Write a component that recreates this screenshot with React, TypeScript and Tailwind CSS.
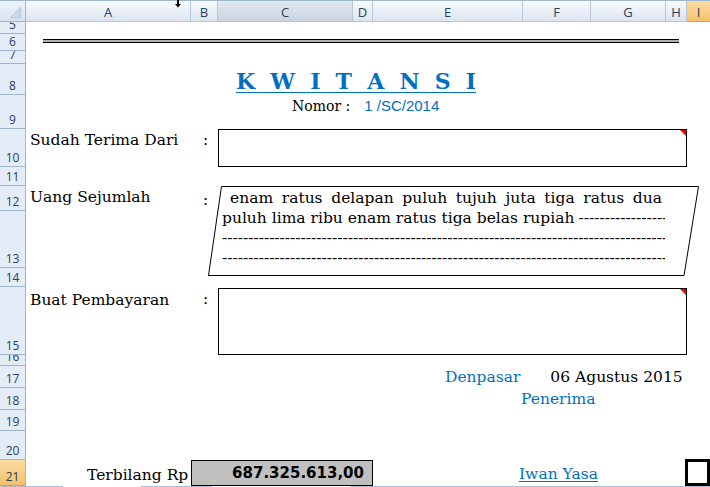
import React from "react";

const rowHeads = [
  { n: "5", c: "h-[12px]" },
  { n: "6", c: "h-[17px]" },
  { n: "7", c: "h-[13px]" },
  { n: "8", c: "h-[31px]" },
  { n: "9", c: "h-[34px]" },
  { n: "10", c: "h-[38px]" },
  { n: "11", c: "h-[19px]" },
  { n: "12", c: "h-[25px]" },
  { n: "13", c: "h-[57px]" },
  { n: "14", c: "h-[19px]" },
  { n: "15", c: "h-[68px]" },
  { n: "16", c: "h-[11px]" },
  { n: "17", c: "h-[22px]" },
  { n: "18", c: "h-[22px]" },
  { n: "19", c: "h-[21px]" },
  { n: "20", c: "h-[29px]" },
];

const colHeads = [
  { n: "A", c: "w-[165px]" },
  { n: "B", c: "w-[27px]" },
  { n: "C", c: "w-[135px]" },
  { n: "D", c: "w-[20px]" },
  { n: "E", c: "w-[150px]" },
  { n: "F", c: "w-[68px]" },
  { n: "G", c: "w-[75px]" },
  { n: "H", c: "w-[21px]" },
];

const DASHES = "-".repeat(140);

function CommentMark() {
  return (
    <span className="absolute top-0 right-0 w-0 h-0 border-t-[6px] border-t-[#ff0000] border-l-[6px] border-l-transparent" />
  );
}

export default function App() {
  return (
    <div className="relative w-[710px] h-[487px] overflow-hidden bg-white">
      {/* column header */}
      <div className="flex h-[22px] border-t border-[#9eb6ce] font-['Open_Sans',sans-serif] text-[13px] leading-none text-[#27415f]">
        <div className="relative w-[26px] shrink-0 border-r border-b border-[#9eb6ce] bg-linear-to-b from-[#eef3fa] to-[#d9e3f0]">
          <svg className="absolute inset-0" width="26" height="21" viewBox="0 0 26 21">
            <polygon points="21,6 21,17 10,17" fill="#c9d7e8" stroke="#aebfd4" strokeWidth="0.6" />
          </svg>
        </div>
        {colHeads.map((h) => (
          <div
            key={h.n}
            className={`${h.c} shrink-0 flex items-center justify-center pt-[2px] border-r border-b border-[#b4c6dc] ${
              h.n === "C"
                ? "bg-linear-to-b from-[#e3e9f1] to-[#c9d3df]"
                : "bg-linear-to-b from-[#f8fafd] to-[#dbe4f0]"
            }`}
          >
            {h.n}
          </div>
        ))}
        <div className="w-[23px] shrink-0 flex items-center justify-center pt-[2px] border-b border-[#f29536] bg-linear-to-b from-[#fbdda3] to-[#f5c16a]">
          I
        </div>
      </div>

      {/* mouse cursor */}
      <svg className="absolute left-[175px] top-0" width="6" height="8" viewBox="0 0 6 8">
        <rect x="2" y="0" width="2" height="4.5" fill="#000" />
        <polygon points="0,4 6,4 3,7.5" fill="#000" />
      </svg>

      <div className="flex">
        {/* row headers */}
        <div className="w-[26px] shrink-0 flex flex-col border-r border-[#9eb6ce] font-['Open_Sans',sans-serif] text-[12px] leading-none text-[#27415f]">
          {rowHeads.map((r) => (
            <div
              key={r.n}
              className={`${r.c} overflow-hidden flex items-end justify-center pb-[2px] border-b border-[#9eb6ce] bg-[#e4ecf7]`}
            >
              {r.n}
            </div>
          ))}
          <div className="h-[26px] overflow-hidden flex items-end justify-center pb-[2px] border-b border-[#f29536] bg-linear-to-b from-[#fbdda3] to-[#f5c16a]">
            21
          </div>
        </div>

        {/* sheet content */}
        <div className="grid grid-cols-[165px_27px_135px_20px_150px_68px_75px_21px_23px] grid-rows-[12px_17px_13px_31px_34px_38px_19px_25px_57px_19px_68px_11px_22px_22px_21px_29px_26px] font-['DejaVu_Serif',serif] text-[15.5px] leading-none text-black">
          {/* double line */}
          <div className="col-start-1 col-end-9 row-start-2 self-start mt-[5px] ml-[17px] mr-[8px] h-[4px] border-y border-black bg-[#b0b0b0]" />

          {/* title */}
          <div className="col-start-3 col-end-8 row-start-4 self-start mt-[6px] ml-[18px] w-[240px] flex justify-between border-b border-[#0070c0] text-[22px] font-bold text-[#0070c0]">
            {"KWITANSI".split("").map((c, i) => (
              <span key={i}>{c}</span>
            ))}
          </div>

          {/* nomor */}
          <div className="col-start-3 col-end-8 row-start-5 self-start mt-[3px] ml-[74px] flex items-baseline">
            <span className="text-[14px]">Nomor :</span>
            <span className="ml-[14px] font-['Liberation_Sans',sans-serif] text-[15px] text-[#0070c0]">1 /SC/2014</span>
          </div>

          {/* Sudah Terima Dari */}
          <div className="col-start-1 row-start-6 self-start mt-[4px] ml-[4px] whitespace-nowrap">Sudah Terima Dari</div>
          <div className="col-start-2 row-start-6 self-start mt-[4px] ml-[12px]">:</div>
          <div className="col-start-3 col-end-9 row-start-6 relative border border-black">
            <CommentMark />
          </div>

          {/* Uang Sejumlah */}
          <div className="col-start-1 row-start-8 self-start mt-[4px] ml-[4px] whitespace-nowrap">Uang Sejumlah</div>
          <div className="col-start-2 row-start-8 self-start mt-[7px] ml-[12px]">:</div>
          <div className="col-start-2 col-end-10 row-start-8 row-end-11 self-start relative ml-[17px] w-[491px] h-[90px]">
            <svg className="absolute inset-0" width="491" height="90" viewBox="0 0 491 90">
              <polygon points="13.5,0.5 490.5,0.5 476,89.5 0.5,89.5" fill="none" stroke="#000" strokeWidth="1" />
            </svg>
            <div className="relative ml-[14px] w-[443px] pt-[1.5px] leading-[20.33px]">
              <div className="pl-[8px] pr-[3px] text-justify [text-align-last:justify]">
                enam ratus delapan puluh tujuh juta tiga ratus dua
              </div>
              <div className="flex">
                <span className="whitespace-nowrap">puluh lima ribu enam ratus tiga belas rupiah</span>
                <span className="ml-[4px] flex-1 overflow-hidden whitespace-nowrap">{DASHES}</span>
              </div>
              <div className="overflow-hidden whitespace-nowrap">{DASHES}</div>
              <div className="overflow-hidden whitespace-nowrap">{DASHES}</div>
            </div>
          </div>

          {/* Buat Pembayaran */}
          <div className="col-start-1 row-start-11 self-start mt-[6px] ml-[4px] whitespace-nowrap">Buat Pembayaran</div>
          <div className="col-start-2 row-start-11 self-start mt-[5px] ml-[12px]">:</div>
          <div className="col-start-3 col-end-9 row-start-11 relative mt-[1px] border border-black">
            <CommentMark />
          </div>

          {/* place / date */}
          <div className="col-start-5 col-end-10 row-start-13 self-start mt-[4px] ml-[72px] flex whitespace-nowrap">
            <span className="text-[#0070c0]">Denpasar</span>
            <span className="ml-[30px]">06 Agustus 2015</span>
          </div>
          <div className="col-start-5 col-end-10 row-start-14 self-start mt-[4px] ml-[148px] text-[#0070c0]">Penerima</div>

          {/* bottom row */}
          <div className="col-start-1 row-start-17 self-start mt-[8px] ml-[61px] whitespace-nowrap">Terbilang Rp</div>
          <div className="col-start-2 col-end-5 row-start-17 flex justify-end pr-[8px] pt-[4.5px] border border-black bg-[#c0c0c0] font-['DejaVu_Sans',sans-serif] text-[15px] font-bold">
            687.325.613,00
          </div>
          <div className="col-start-5 col-end-10 row-start-17 self-start mt-[7px] ml-[146px] whitespace-nowrap text-[#0070c0] underline decoration-1 underline-offset-[2px]">
            Iwan Yasa
          </div>
          <div className="col-start-9 row-start-17 ml-[-2px] mt-[-1px] w-[25px] border-[3px] border-black" />
        </div>
      </div>

      {/* bottom edge */}
      <div className="flex h-[1px]">
        <div className="w-[63px] bg-[#a9c0dd]" />
        <div className="w-[78px]" />
        <div className="w-[71px] bg-[#a9c0dd]" />
        <div className="w-[138px]" />
        <div className="flex-1 bg-[#a9c0dd]" />
      </div>
    </div>
  );
}
